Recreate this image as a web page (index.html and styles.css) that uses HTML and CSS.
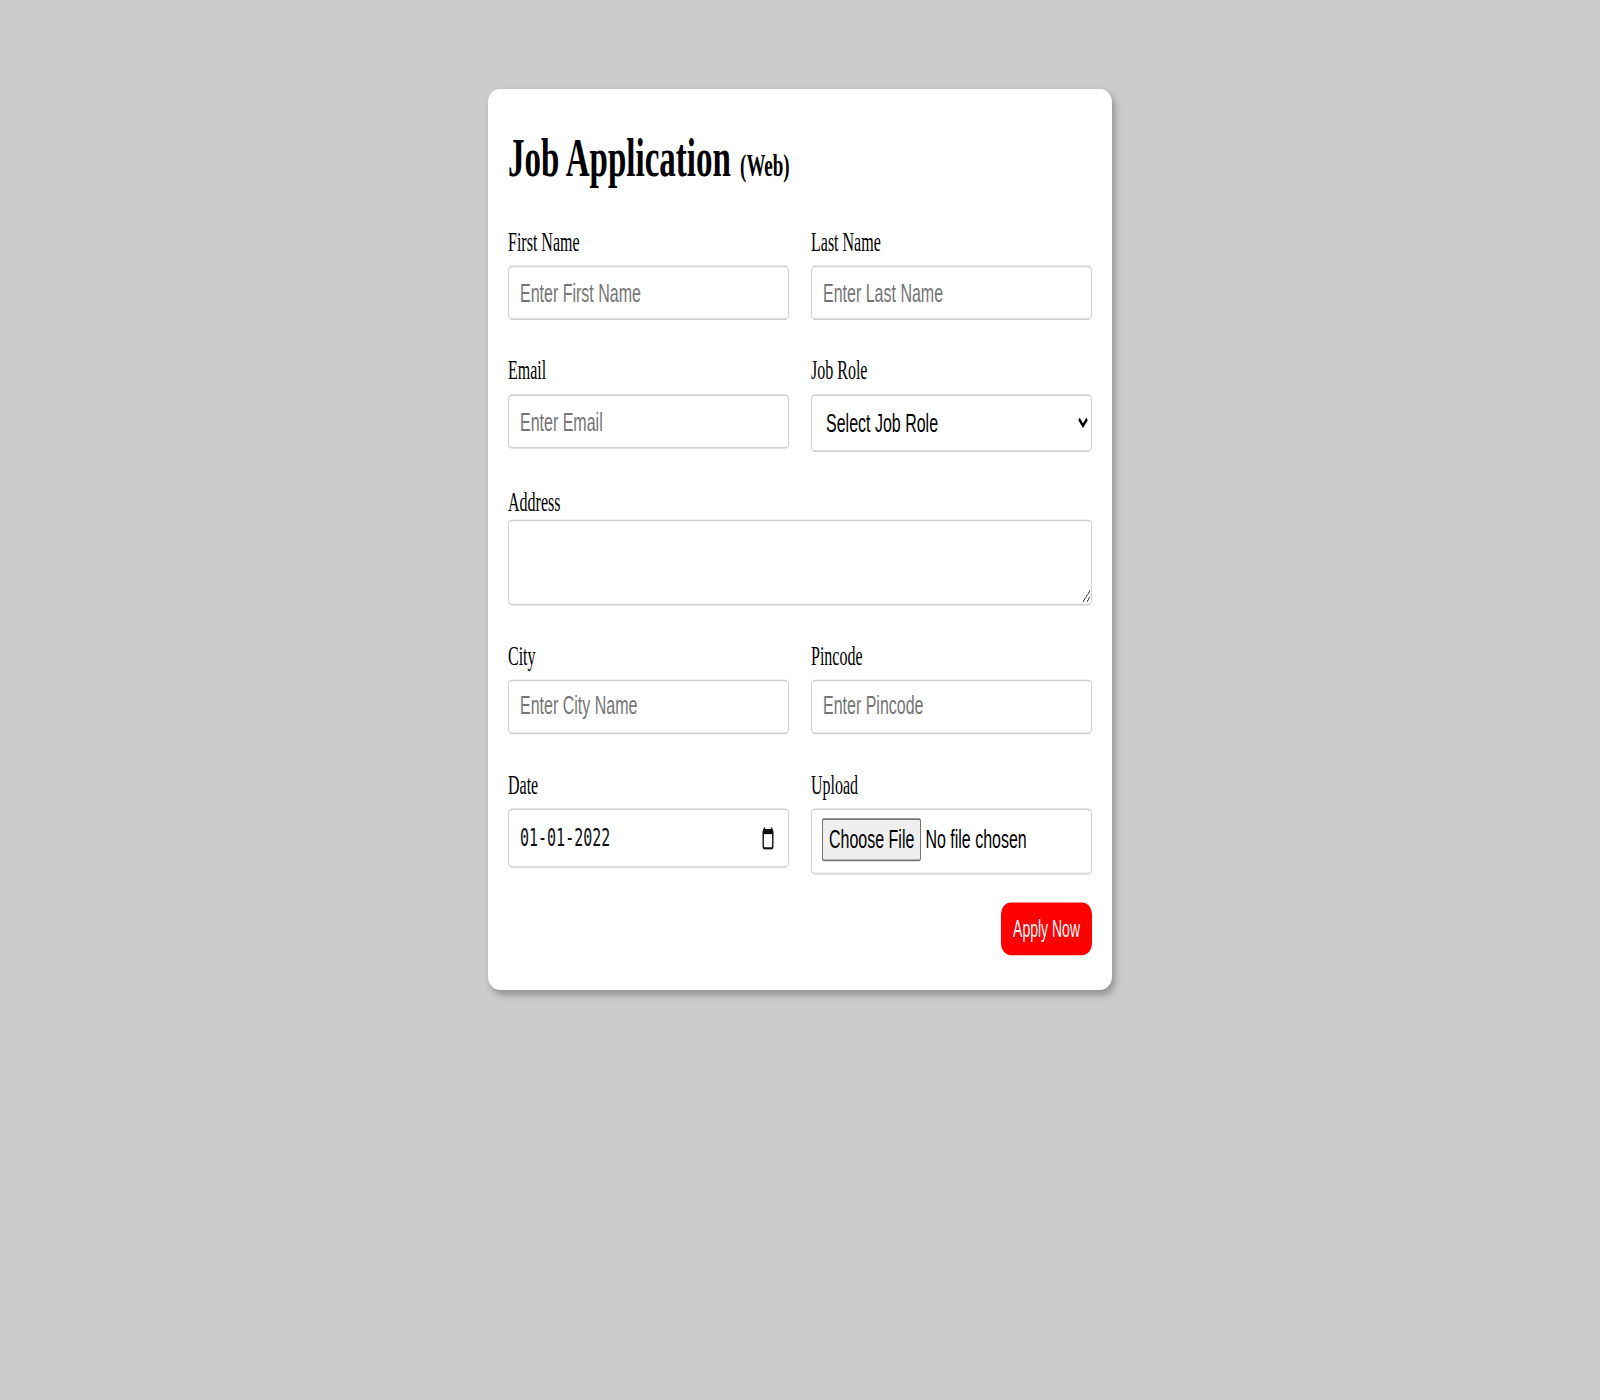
FILE: index.html
```html
<!DOCTYPE html>
<html lang="en">
<head>
<meta charset="utf-8">
<title>Job Application</title>
<link rel="stylesheet" href="styles.css">
</head>
<body>
<div class="page">
  <form class="card">
    <h1 class="title">Job Application <small class="title-sub">(Web)</small></h1>
    <div class="grid">
      <div class="field">
        <label class="label" for="fname">First Name</label>
        <input class="input" id="fname" type="text" placeholder="Enter First Name">
      </div>
      <div class="field">
        <label class="label" for="lname">Last Name</label>
        <input class="input" id="lname" type="text" placeholder="Enter Last Name">
      </div>
      <div class="field">
        <label class="label" for="email">Email</label>
        <input class="input" id="email" type="text" placeholder="Enter Email">
      </div>
      <div class="field">
        <label class="label" for="role">Job Role</label>
        <select class="select" id="role">
          <option>Select Job Role</option>
          <option>Frontend</option>
          <option>Backend</option>
        </select>
      </div>
      <div class="field field-wide">
        <label class="label label-tight" for="addr">Address</label>
        <textarea class="textarea" id="addr"></textarea>
      </div>
      <div class="field">
        <label class="label" for="city">City</label>
        <input class="input" id="city" type="text" placeholder="Enter City Name">
      </div>
      <div class="field">
        <label class="label" for="pin">Pincode</label>
        <input class="input" id="pin" type="text" placeholder="Enter Pincode">
      </div>
      <div class="field">
        <span class="label">Date</span>
        <div class="date-field">
          <span class="date-text">01-01-2022</span>
          <svg class="cal-icon" width="12" height="14" viewBox="0 0 12 14" aria-hidden="true">
            <rect x="1.2" y="2.2" width="9.6" height="11" rx="1.2" fill="none" stroke="#111" stroke-width="1.4"/>
            <rect x="1.2" y="2.2" width="9.6" height="2.4" fill="#111"/>
            <rect x="1.6" y="0.6" width="1.6" height="2.5" fill="#111"/>
            <rect x="8.8" y="0.6" width="1.6" height="2.5" fill="#111"/>
          </svg>
        </div>
      </div>
      <div class="field">
        <span class="label">Upload</span>
        <div class="file-field">
          <span class="file-btn">Choose File</span>
          <span class="file-text">No file chosen</span>
        </div>
      </div>
    </div>
    <div class="actions">
      <button class="apply" type="button">Apply Now</button>
    </div>
  </form>
</div>
</body>
</html>
```

FILE: styles.css
```css
html, body {
  margin: 0;
  padding: 0;
}

body {
  background: #cccccc;
  font-family: "Liberation Serif", "Times New Roman", serif;
  color: #000;
}

.page {
  box-sizing: border-box;
  min-height: 1400px;
  display: flex;
  justify-content: center;
  align-items: flex-start;
  padding-top: 89px;
}

.card {
  box-sizing: border-box;
  width: 624px;
  padding: 20px 20px 21px;
  background: #ffffff;
  border-radius: 12px / 8px;
  box-shadow: 3px 3px 6px rgba(0, 0, 0, 0.28);
  transform: scaleY(1.65);
  transform-origin: top center;
}

.title {
  margin: 4px 0 23px;
  font-size: 33px;
  font-weight: bold;
  line-height: normal;
}

.title-sub {
  font-size: 19px;
  font-weight: bold;
  margin-left: 1px;
}

.grid {
  display: grid;
  grid-template-columns: 1fr 1fr;
  column-gap: 22px;
  row-gap: 22px;
  align-items: start;
}

.field {
  display: flex;
  flex-direction: column;
}

.field-wide {
  grid-column: 1 / span 2;
}

.label {
  display: block;
  font-size: 16px;
  line-height: normal;
  margin-bottom: 5px;
}

.label-tight {
  margin-bottom: 1px;
}

.input,
.select,
.textarea,
.date-field,
.file-field {
  box-sizing: border-box;
  width: 100%;
  border: 1px solid #d2d2d2;
  border-radius: 4px / 3px;
  background: #fff;
  font-family: "Liberation Sans", Arial, sans-serif;
  font-size: 16px;
  color: #000;
  margin: 0;
}

.input {
  padding: 6.5px 11px;
  line-height: normal;
}

.input::placeholder {
  color: #757575;
}

.select {
  padding: 6px 6px 6px 10px;
  height: 34.5px;
}

.textarea {
  display: block;
  height: 52px;
  padding: 6px 11px;
  resize: vertical;
}

.date-field {
  display: flex;
  align-items: center;
  justify-content: space-between;
  height: 36.5px;
  padding: 0 14px 0 11px;
}

.date-text {
  font-family: "DejaVu Sans Mono", "Liberation Mono", monospace;
  font-size: 15px;
  color: #111;
}

.cal-icon {
  display: block;
}

.file-field {
  display: flex;
  align-items: center;
  padding: 5px 10px 7px;
}

.file-btn {
  padding: 3px 6px;
  border: 1px solid #767676;
  border-radius: 2px;
  background: #efefef;
  line-height: normal;
}

.file-text {
  margin-left: 4px;
}

.actions {
  display: flex;
  justify-content: flex-end;
  margin-top: 17px;
}

.apply {
  padding: 8px 12px;
  border: none;
  border-radius: 10px / 7px;
  background: #ff0000;
  color: #fff;
  font-family: "Liberation Sans", Arial, sans-serif;
  font-size: 14px;
  line-height: normal;
  cursor: pointer;
}
```
